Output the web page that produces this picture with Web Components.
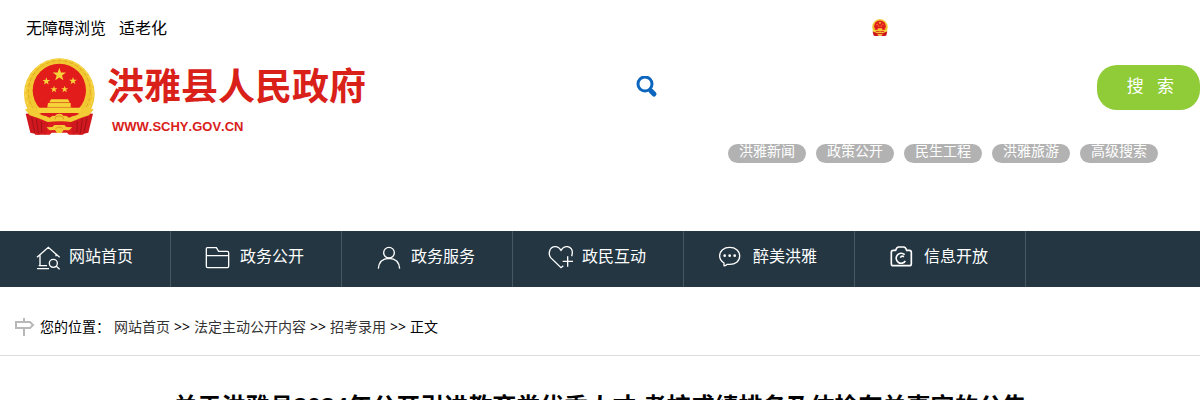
<!DOCTYPE html>
<html lang="zh-CN">
<head>
<meta charset="utf-8">
<meta name="viewport" content="width=device-width, initial-scale=1">
<title>洪雅县人民政府</title>
<style>
    body {
        margin: 0;
        background: #fff;
        color: #000;
        font: 14px/24px "Noto Sans", "Noto Sans CJK SC", sans-serif;
    }
</style>
</head>
<body>
<top-bar>
    <top-link href="#accessible">无障碍浏览</top-link>
    <top-link href="#elder">适老化</top-link>
    <gov-emblem slot="badge" size="16"></gov-emblem>
</top-bar>
<site-header>
    <site-logo domain="WWW.SCHY.GOV.CN">洪雅县人民政府</site-logo>
    <site-search slot="search">
        <quick-tag>洪雅新闻</quick-tag>
        <quick-tag>政策公开</quick-tag>
        <quick-tag>民生工程</quick-tag>
        <quick-tag>洪雅旅游</quick-tag>
        <quick-tag>高级搜索</quick-tag>
    </site-search>
</site-header>
<site-nav>
    <nav-item icon="home">网站首页</nav-item>
    <nav-item icon="folder">政务公开</nav-item>
    <nav-item icon="user">政务服务</nav-item>
    <nav-item icon="heart">政民互动</nav-item>
    <nav-item icon="chat">醉美洪雅</nav-item>
    <nav-item icon="camera">信息开放</nav-item>
</site-nav>
<bread-crumb></bread-crumb>
<article-title>关于洪雅县2024年公开引进教育类优秀人才 考核成绩排名及体检有关事宜的公告</article-title>

<script>
class BaseElement extends HTMLElement {
    constructor() {
        super();
        this.attachShadow({ mode: 'open' });
    }

    connectedCallback() {
        this.shadowRoot.innerHTML = this.render();
    }
}

// points of a five-pointed star
function star(cx, cy, r) {
    const points = [];
    for (let i = 0; i < 10; i++) {
        const a = -Math.PI / 2 + i * Math.PI / 5;
        const d = i % 2 ? r * 0.4 : r;
        points.push((cx + d * Math.cos(a)).toFixed(1) + ',' + (cy + d * Math.sin(a)).toFixed(1));
    }
    return `<polygon points="${points.join(' ')}"/>`;
}

class GovEmblem extends BaseElement {
    render() {
        return `
            <style>
                :host { display: block; flex: none; }
                svg { display: block; }
            </style>
            <svg width="${this.getAttribute('size')}" viewBox="24 21 219 237" aria-hidden="true">
                <circle cx="133" cy="131" r="106" fill="#f2c832"/>
                <circle cx="133" cy="125" r="93" fill="none" stroke="#e0ab22" stroke-width="3" stroke-dasharray="12 6"/>
                <circle cx="133" cy="128" r="101" fill="none" stroke="#f8dc58" stroke-width="3" stroke-dasharray="14 6"/>
                <circle cx="133" cy="121" r="80" fill="#e21b1b"/>
                <g fill="#f7d33a">
                    ${star(133, 74, 21)}${star(94, 94, 12)}${star(174, 93, 12)}${star(117, 118, 11)}${star(149, 118, 11)}
                    <path d="M108 148H159L164 157H103Z"/>
                    <path d="M99 159H167V172H97Z"/>
                </g>
                <path d="M104 158H164M97 172H170" stroke="#d9981f" stroke-width="2"/>
                <path d="M62 186H204L212 200L205 254H162L156 248H110L104 254H60L54 200Z" fill="#dc1c1e"/>
                <path d="M32 191L60 189L72 206L100 218L92 254L82 248L72 254L46 248Z" fill="#d0181e"/>
                <path d="M234 191L206 189L194 206L166 218L174 254L184 248L194 254L220 248Z" fill="#d0181e"/>
                <path d="M50 202L59 248M64 207L70 250M79 215L80 247M216 202L207 248M202 207L196 250M187 215L186 247" stroke="#a01119" stroke-width="3"/>
                <path d="M67 173H199V189H67Z" fill="#f7d33a"/>
                <path d="M30 178L58 172Q68 191 104 203Q112 196 120 198Q124 191 133 191T146 198Q154 196 162 203Q198 191 208 172L236 178L222 196Q192 205 168 216Q150 213 133 214T98 216Q74 205 44 196Z" fill="#f2cb35"/>
                <path d="M72 191L100 190L108 196L99 199Q83 197 72 191ZM194 191L166 190L158 196L167 199Q183 197 194 191Z" fill="#dc1c1e"/>
                <path d="M120 208Q120 198 133 198T146 208" fill="none" stroke="#d9981f" stroke-width="3"/>
                <path d="M94 232L112 231L118 225H148L154 231L172 232L162 241L146 240L140 249H126L120 240L104 241Z" fill="#f2cb35"/>
                <path d="M122 236Q133 226 144 236" fill="none" stroke="#d9981f" stroke-width="3"/>
            </svg>`;
    }
}

class TopBar extends BaseElement {
    render() {
        return `
            <style>
                :host {
                    display: flex;
                    align-items: center;
                    justify-content: space-between;
                    padding: 16px 26% 0 26px;
                }
                div { display: flex; gap: 13px; }
            </style>
            <div><slot></slot></div>
            <slot name="badge"></slot>`;
    }
}

class TopLink extends BaseElement {
    render() {
        return `
            <style>
                :host { display: block; font-size: 16px; }
                a { color: #000; text-decoration: none; }
            </style>
            <a href="${this.getAttribute('href')}"><slot></slot></a>`;
    }
}

class SiteHeader extends BaseElement {
    render() {
        return `
            <style>
                :host { display: block; }
                header {
                    display: grid;
                    grid-template-columns: 1fr 48%;
                    align-items: start;
                    padding: 17px 0 68px 23px;
                }
            </style>
            <header>
                <slot></slot>
                <slot name="search"></slot>
            </header>`;
    }
}

class SiteLogo extends BaseElement {
    render() {
        return `
            <style>
                :host { display: block; }
                a {
                    display: flex;
                    gap: 11px;
                    color: #d9211a;
                    font-weight: bold;
                    text-decoration: none;
                    white-space: nowrap;
                }
                .name { display: block; font-size: 37px; line-height: 58px; }
                .domain {
                    display: block;
                    padding-left: 5px;
                    font: bold 13px/24px "Liberation Sans", sans-serif;
                    font-kerning: none;
                }
            </style>
            <a href="#home">
                <gov-emblem size="73"></gov-emblem>
                <span>
                    <span class="name"><slot></slot></span>
                    <span class="domain">${this.getAttribute('domain')}</span>
                </span>
            </a>`;
    }
}

class SiteSearch extends BaseElement {
    render() {
        return `
            <style>
                :host { display: block; padding-top: 8px; }
                form { display: flex; align-items: center; }
                label { display: flex; padding-right: 12px; }
                input {
                    flex: 1;
                    min-width: 0;
                    height: 45px;
                    padding: 0;
                    border: 0;
                    outline: 0;
                    background: transparent;
                    font: inherit;
                }
                button {
                    width: 103px;
                    height: 45px;
                    padding: 0 0 4px 4px;
                    border: 0;
                    border-radius: 20px;
                    background: #8fcc37;
                    color: #fff;
                    font: inherit;
                    font-size: 17px;
                    white-space: pre;
                }
                .tags {
                    display: flex;
                    justify-content: flex-end;
                    gap: 10px;
                    padding: 34px 42px 0 0;
                }
            </style>
            <form>
                <label for="q" aria-label="搜索">
                    <svg width="24" height="24" viewBox="0 0 24 24" fill="none" stroke="#0d66bd" aria-hidden="true">
                        <circle cx="10" cy="8" r="7" stroke-width="3"/>
                        <path d="M16 15L19 18" stroke-width="5" stroke-linecap="round"/>
                    </svg>
                </label>
                <input id="q" type="text">
                <button type="button">搜   索</button>
            </form>
            <div class="tags"><slot></slot></div>`;
    }
}

class QuickTag extends BaseElement {
    render() {
        return `
            <style>
                :host { display: block; }
                a {
                    display: block;
                    height: 19px;
                    padding: 0 11px;
                    border-radius: 10px;
                    background: #b2b2b2;
                    color: #fff;
                    line-height: 14px;
                    text-decoration: none;
                }
            </style>
            <a href="#tag"><slot></slot></a>`;
    }
}

class SiteNav extends BaseElement {
    render() {
        return `
            <style>
                :host { display: block; background: #233642; }
                nav { display: flex; }
            </style>
            <nav><slot></slot></nav>`;
    }
}

const icons = {
    home: {
        box: '102 51 78 84',
        body: '<path d="M111 97L145 67L179 97M120 91V122M168 88V94M111 131H147M116 122H141"/><circle cx="160" cy="115" r="12"/><path d="M169 124L179 133"/>'
    },
    folder: {
        box: '615 51 78 84',
        body: '<path d="M619 124V71Q619 68 622 68H649L656 79H682Q686 79 686 83V124Q686 128 682 128H623Q619 128 619 124ZM619 92H686"/>'
    },
    user: {
        box: '108 51 78 84',
        body: '<circle cx="147" cy="83" r="16"/><path d="M115 131Q117 101 147 100Q177 101 179 131"/>'
    },
    heart: {
        box: '621 51 78 84',
        body: '<path d="M670 122L663 128L632 98C624 87 628 67 643 65Q655 63 663 76Q671 63 683 65Q697 68 697 82Q697 88 695 94M683 94V125M668 109H699"/>'
    },
    chat: {
        box: '114 51 78 84',
        body: '<path d="M132 114Q119 106 119 93C119 77 132 67 149 67S179 77 179 93S166 118 149 118H142Q136 123 132 122Z"/><g fill="#fff" stroke="none"><circle cx="134" cy="92" r="4"/><circle cx="149" cy="92" r="4"/><circle cx="164" cy="92" r="4"/></g>'
    },
    camera: {
        box: '627 51 78 84',
        body: '<path stroke-width="5" d="M640 76H647Q650 66 656 66H671Q677 66 680 76H688Q694 76 694 82V116Q694 122 688 122H640Q634 122 634 116V82Q634 76 640 76Z"/><path stroke-width="5" d="M674 89A15 15 0 1 0 676 108M672 95Q665 91 661 98"/>'
    }
};

class NavItem extends BaseElement {
    render() {
        const icon = icons[this.getAttribute('icon')];
        return `
            <style>
                :host { display: block; width: 170px; border-right: 1px solid #475863; }
                a {
                    display: flex;
                    align-items: center;
                    gap: 9px;
                    padding: 0 0 6px 34px;
                    color: #fff;
                    font-size: 16px;
                    line-height: 50px;
                    text-decoration: none;
                    white-space: nowrap;
                }
            </style>
            <a href="#${this.getAttribute('icon')}">
                <svg width="26" height="28" viewBox="${icon.box}" fill="none" stroke="#fff" stroke-width="4" aria-hidden="true">${icon.body}</svg>
                <span><slot></slot></span>
            </a>`;
    }
}

class BreadCrumb extends BaseElement {
    render() {
        return `
            <style>
                :host {
                    display: flex;
                    align-items: center;
                    gap: 5px;
                    padding: 28px 15px 16px;
                    border-bottom: 1px solid #ddd;
                }
                nav { display: flex; gap: 4px; }
                a { color: #333; text-decoration: none; }
            </style>
            <svg width="20" height="20" viewBox="0 0 20 20" fill="none" stroke="#b8b8b8" aria-hidden="true">
                <path d="M1 5H15L18 8L15 11H1Z" stroke-width="2"/>
                <path d="M9 1V4M9 12V19" stroke-width="2"/>
            </svg>
            <nav>
                <span>您的位置：</span>
                <a href="#home">网站首页</a>
                <span>&gt;&gt;</span>
                <a href="#public">法定主动公开内容</a>
                <span>&gt;&gt;</span>
                <a href="#recruit">招考录用</a>
                <span>&gt;&gt;</span>
                <span>正文</span>
            </nav>`;
    }
}

class ArticleTitle extends BaseElement {
    render() {
        return `
            <style>
                :host { display: block; padding: 32px 20px; }
                h1 { margin: 0; font-size: 24px; line-height: 36px; text-align: center; }
            </style>
            <h1><slot></slot></h1>`;
    }
}

customElements.define('gov-emblem', GovEmblem);
customElements.define('top-bar', TopBar);
customElements.define('top-link', TopLink);
customElements.define('site-header', SiteHeader);
customElements.define('site-logo', SiteLogo);
customElements.define('site-search', SiteSearch);
customElements.define('quick-tag', QuickTag);
customElements.define('site-nav', SiteNav);
customElements.define('nav-item', NavItem);
customElements.define('bread-crumb', BreadCrumb);
customElements.define('article-title', ArticleTitle);
</script>
</body>
</html>
